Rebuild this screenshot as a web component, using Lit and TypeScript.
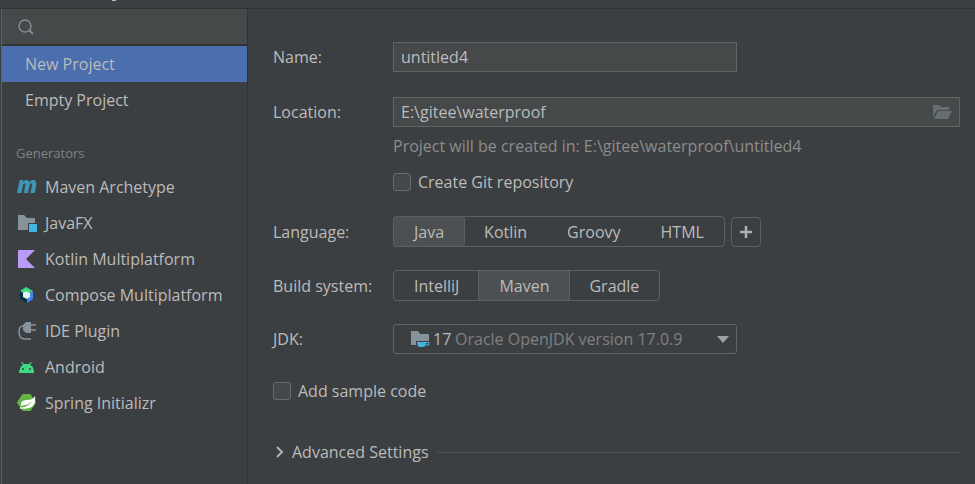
import { LitElement, html, css, svg, nothing } from "lit";
import { customElement, property, state } from "lit/decorators.js";
import { classMap } from "lit/directives/class-map.js";

const icons: Record<string, unknown> = {
  maven: svg`<text x="0" y="15" fill="#3e95b8" font-size="22" font-weight="800" font-style="italic">m</text>`,
  javafx: svg`<path fill="#87939a" d="M1 1H7L10 4H18V9H11V16H1Z"/><rect x="12" y="10" width="8" height="8" fill="#40b6e0"/>`,
  kotlin: svg`<path fill="#b99bf8" d="M1 0H18L9 9L18 18H1Z"/>`,
  compose: svg`<path fill="#3ddc84" d="M9 1L16 5L13 7L9 5L6 8L3 5Z"/><path fill="#083042" d="M3 5L6 7V11L10 13V17L3 13Z"/><path fill="#4285f4" d="M16 5V13L10 17V13L13 11V7Z"/><path fill="#e2f5f2" d="M9 5L13 7V11L10 13L6 11V7Z"/>`,
  plugin: svg`<path fill="#87939a" d="M9 0H14V11H9L6 8V3Z"/><path fill="none" stroke="#87939a" stroke-width="1.500" d="M14 3H19M14 8H19"/><path fill="none" stroke="#87939a" stroke-width="1.500" d="M6 4C3 4 2 6 2 10C2 15 4 17 8 17H14"/>`,
  android: svg`<path fill="#3ddc84" d="M2 15C2 11 4 8 6 7L4 4L5 4L7 6H12L14 4L15 4L13 7C16 8 17 11 17 15Z"/><circle cx="6" cy="11" r="1" fill="#3c3f41"/><circle cx="13" cy="11" r="1" fill="#3c3f41"/>`,
  spring: svg`<path fill="#63b345" stroke="#63b345" stroke-width="2" stroke-linejoin="round" d="M6 1H13L18 8.500L13 16H6L1 8.500Z"/><path fill="#fff" d="M18 2C19 8 17 13 12 14C9 15 6 15 4 14C8 13 13 11 15 7C12 11 8 11 4 12C3 8 6 6 10 6C14 6 16 5 18 2Z"/><circle cx="4" cy="14" r="1" fill="#fff"/>`,
};

const generators = [
  ["maven", "Maven Archetype"],
  ["javafx", "JavaFX"],
  ["kotlin", "Kotlin Multiplatform"],
  ["compose", "Compose Multiplatform"],
  ["plugin", "IDE Plugin"],
  ["android", "Android"],
  ["spring", "Spring Initializr"],
];

@customElement("segmented-choice")
class SegmentedChoice extends LitElement {
  @property({ type: Array }) options: string[] = [];
  @property() value = "";
  @property() label = "";

  static styles = css`
    :host { display: inline-flex; }
    .group { display: flex; border: 1px solid #5e6060; border-radius: 4px; }
    button {
      height: 29px; padding: 0 20px; border: 0; border-radius: 3px;
      background: transparent; color: #bbb; font: inherit;
    }
    button.on { background: #4c5052; box-shadow: 0 0 0 1px #5e6060; }
  `;

  render() {
    return html`<div class="group" role="group" aria-label=${this.label}>
      ${this.options.map((o) => html`<button
        class=${classMap({ on: o === this.value })}
        aria-pressed=${o === this.value}
        @click=${() => (this.value = o)}>${o}</button>`)}
    </div>`;
  }
}

@customElement("app-root")
class AppRoot extends LitElement {
  @state() private selected = "New Project";

  static styles = css`
    * { box-sizing: border-box; }
    :host {
      display: flex; flex-direction: column; min-height: 100vh; box-sizing: border-box;
      background: #3c3f41; color: #bbb;
      font: 16px/20px "Open Sans", "Noto Sans", sans-serif;
      border-left: 1px solid #3c3f41;
    }
    button, input, select { font: inherit; color: inherit; }
    .title {
      height: 9px; padding-left: 111px;
      border-bottom: 1px solid #2f3133;
    }
    .title::before { content: ""; display: block; width: 4px; height: 1px; background: #bbb; }
    .body { flex: 1; display: flex; border-left: 1px solid #326ca3; }
    .side { width: 246px; flex: none; border-right: 1px solid #323232; }
    .search {
      display: flex; align-items: center; gap: 8px; height: 37px; padding: 0 16px;
      background: #45494a; border-bottom: 2px solid #323232;
    }
    .search input { flex: 1; min-width: 0; border: 0; outline: 0; background: transparent; }
    .item {
      display: flex; align-items: center; width: 100%; height: 36px; padding: 0 0 0 23px;
      border: 0; background: transparent; text-align: left;
    }
    .item.gen { padding-left: 15px; gap: 9px; }
    .item.on { background: #4b6eaf; }
    .item svg { flex: none; overflow: visible; }
    .heading { margin: 26px 0 7px; padding-left: 14px; color: #808284; font-size: 13px; font-weight: 400; line-height: 18px; }
    form { flex: 1; min-width: 0; padding: 33px 15px 20px 25px; }
    .row { display: grid; grid-template-columns: 120px minmax(0, 1fr); align-items: center; min-height: 30px; }
    .row + .row { margin-top: 23px; }
    .row:first-child { margin-bottom: 25px; }
    .row:first-child + .row { margin-top: 0; }
    .field {
      display: flex; align-items: center; height: 30px; padding: 0 7px;
      background: #45494a; border: 1px solid #646464;
    }
    .narrow { width: 344px; max-width: 100%; }
    .field input { flex: 1; min-width: 0; padding: 0; border: 0; outline: 0; background: transparent; }
    .browse { display: flex; padding: 0; border: 0; background: transparent; }
    .under { margin: 9px 0 24px 120px; display: grid; gap: 16px; }
    .hint { margin: 0; color: #8c8c8c; }
    .check { display: flex; align-items: center; gap: 7px; }
    .check input {
      appearance: none; width: 18px; height: 18px; margin: 0;
      border: 1px solid #6b6b6b; border-radius: 3px; background: #43494a;
    }
    .choices { display: flex; align-items: center; gap: 6px; }
    .add {
      display: grid; place-items: center; width: 30px; height: 30px; padding: 0;
      border: 1px solid #5e6060; border-radius: 4px; background: transparent;
    }
    .jdk { position: relative; }
    .jdk select {
      appearance: none; width: 100%; height: 30px; padding: 0 30px 0 61px;
      border: 1px solid #646464; border-radius: 3px; background: #3c3f41; color: #808080;
    }
    .badge {
      position: absolute; inset: 0 auto 0 18px; display: flex; align-items: center; gap: 3px;
      pointer-events: none;
    }
    .arrow { position: absolute; right: 8px; top: 12px; pointer-events: none; }
    .sample { margin-top: 27px; }
    .advanced { display: flex; align-items: center; gap: 8px; margin-top: 41px; }
    .advanced button { display: flex; align-items: center; gap: 8px; padding: 0 0 0 2px; border: 0; background: transparent; }
    .rule { flex: 1; height: 1px; background: #515151; }
  `;

  private item(name: string, icon?: string) {
    return html`<button
      class=${classMap({ item: true, gen: !!icon, on: this.selected === name })}
      @click=${() => (this.selected = name)}>
      ${icon ? html`<svg width="19" height="18" viewBox="0 0 19 18" aria-hidden="true">${icons[icon]}</svg>` : nothing}
      ${name}
    </button>`;
  }

  render() {
    return html`
      <header class="title"></header>
      <div class="body">
        <nav class="side">
          <label class="search">
            <svg width="16" height="16" viewBox="0 0 16 16" fill="none" stroke="#7f8b91" aria-hidden="true">
              <circle cx="7" cy="7" r="6" stroke-width="1.500"/><path d="M11 11L15 15" stroke-width="2"/>
            </svg>
            <input type="text" aria-label="Search">
          </label>
          ${this.item("New Project")}
          ${this.item("Empty Project")}
          <h2 class="heading">Generators</h2>
          ${generators.map(([icon, name]) => this.item(name, icon))}
        </nav>
        <form @submit=${(e: Event) => e.preventDefault()}>
          <div class="row">
            <label for="name">Name:</label>
            <div class="field narrow"><input id="name" type="text" value="untitled4"></div>
          </div>
          <div class="row">
            <label for="location">Location:</label>
            <div class="field">
              <input id="location" type="text" value="E:\\gitee\\waterproof">
              <button class="browse" type="button" aria-label="Browse">
                <svg width="19" height="14" viewBox="0 0 19 14" fill="#646e73"><path d="M0 0H6L8 2H16V5H4L0 12Z"/><path d="M5 6H19L15 14H1Z"/></svg>
              </button>
            </div>
          </div>
          <div class="under">
            <p class="hint">Project will be created in: E:\\gitee\\waterproof\\untitled4</p>
            <label class="check"><input type="checkbox">Create Git repository</label>
          </div>
          <div class="row">
            <span>Language:</span>
            <div class="choices">
              <segmented-choice label="Language" .options=${["Java", "Kotlin", "Groovy", "HTML"]} value="Java"></segmented-choice>
              <button class="add" type="button" aria-label="Add language">
                <svg width="14" height="14" viewBox="0 0 14 14"><path d="M7 1V13M1 7H13" stroke="#afb1b3" stroke-width="2.500"/></svg>
              </button>
            </div>
          </div>
          <div class="row">
            <span>Build system:</span>
            <segmented-choice label="Build system" .options=${["IntelliJ", "Maven", "Gradle"]} value="Maven"></segmented-choice>
          </div>
          <div class="row">
            <label for="jdk">JDK:</label>
            <div class="jdk narrow">
              <select id="jdk"><option>Oracle OpenJDK version 17.0.9</option></select>
              <span class="badge">
                <svg width="19" height="18" viewBox="0 0 19 18" aria-hidden="true">
                  <path fill="#87939a" d="M0 1H7L9 4H18V11H5V15H0Z"/>
                  <path fill="#40b6e0" d="M6 12H15V14C15 16 13 17 12 17H9C7 17 6 15 6 12Z"/>
                  <path fill="none" stroke="#40b6e0" d="M15 12.500H18V15H15"/>
                </svg>
                17
              </span>
              <svg class="arrow" width="12" height="7" viewBox="0 0 12 7" aria-hidden="true"><path fill="#9da0a2" d="M0 0H12L6 7Z"/></svg>
            </div>
          </div>
          <label class="check sample"><input type="checkbox">Add sample code</label>
          <div class="advanced">
            <button type="button" aria-expanded="false">
              <svg width="9" height="12" viewBox="0 0 9 12" aria-hidden="true"><path d="M2 1L7 6L2 11" fill="none" stroke="#afb1b3" stroke-width="2"/></svg>
              Advanced Settings
            </button>
            <span class="rule"></span>
          </div>
        </form>
      </div>
    `;
  }
}
